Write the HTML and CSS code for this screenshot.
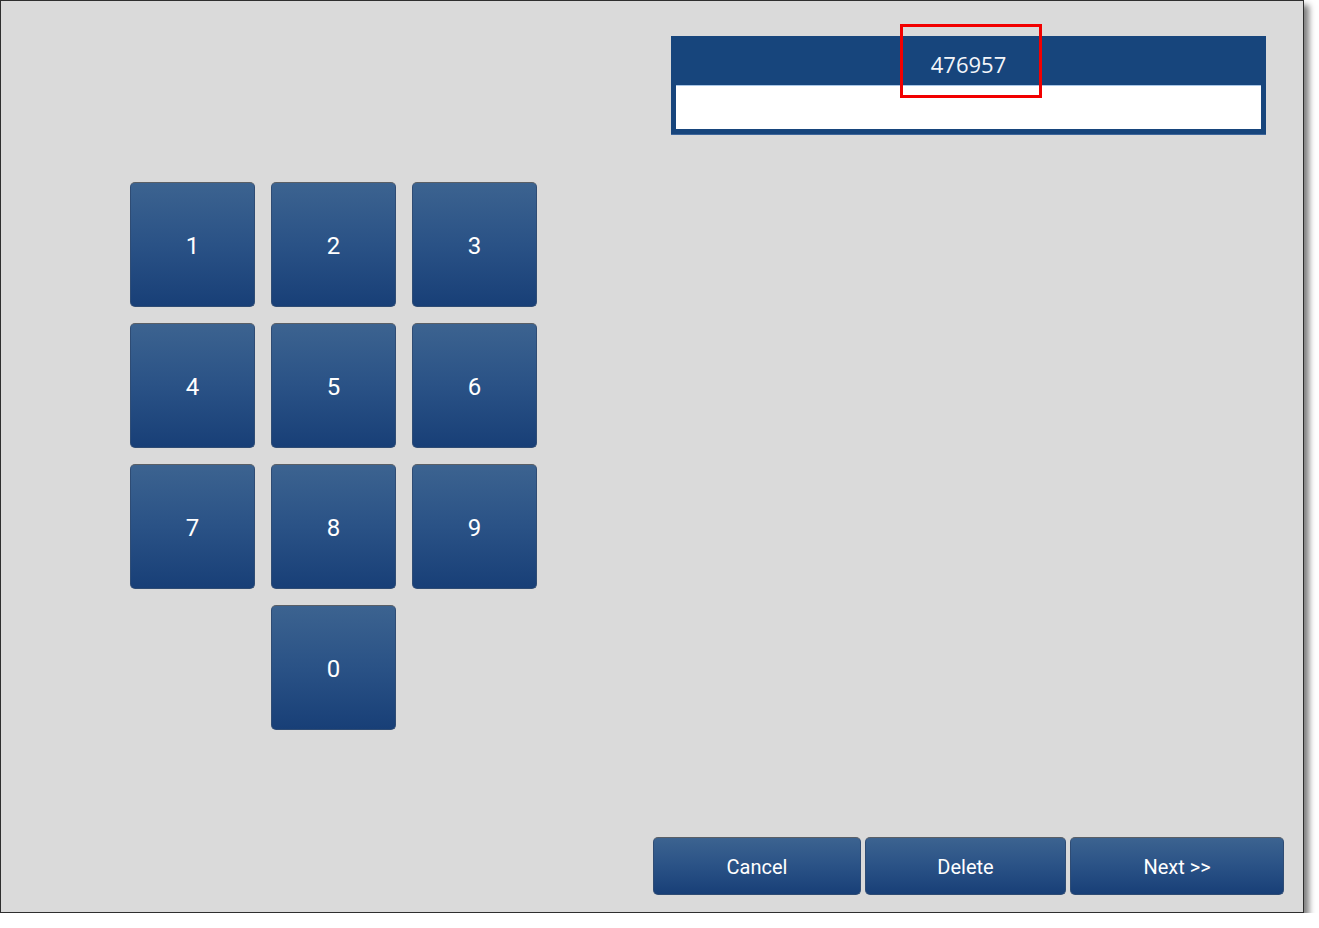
FILE: index.html
```html
<!DOCTYPE html>
<html lang="en">
<head>
<meta charset="utf-8">
<title>Keypad</title>
<link rel="stylesheet" href="styles.css">
</head>
<body>
<div class="frame">
  <div class="keypad">
    <button class="key">1</button>
    <button class="key">2</button>
    <button class="key">3</button>
    <button class="key">4</button>
    <button class="key">5</button>
    <button class="key">6</button>
    <button class="key">7</button>
    <button class="key">8</button>
    <button class="key">9</button>
    <button class="key key-zero">0</button>
  </div>
  <div class="side">
    <div class="display">
      <div class="display-head">476957</div>
      <div class="display-field"></div>
    </div>
    <div class="actions">
      <button class="action action-cancel">Cancel</button>
      <button class="action action-delete">Delete</button>
      <button class="action action-next">Next &gt;&gt;</button>
    </div>
  </div>
  <div class="callout"></div>
</div>
</body>
</html>
```

FILE: styles.css
```css
html, body {
  margin: 0;
  padding: 0;
  background: #ffffff;
}

.frame {
  position: relative;
  box-sizing: border-box;
  width: 1304px;
  height: 913px;
  border: 1px solid #2e2e2e;
  background: #dadada;
  box-shadow: 5px 5px 6px rgba(0, 0, 0, 0.5);
  padding: 35px 19px 17px 129px;
  display: grid;
  grid-template-columns: 407px 631px;
  column-gap: 116px;
  font-family: Roboto, "Liberation Sans", sans-serif;
}

.keypad {
  margin-top: 146px;
  display: grid;
  grid-template-columns: repeat(3, 125px);
  grid-auto-rows: 125px;
  gap: 16px;
  align-content: start;
}

.key,
.action {
  box-sizing: border-box;
  margin: 0;
  padding: 0;
  border: 1px solid #2f4c74;
  border-top-color: #5a5f66;
  border-radius: 5px;
  background: linear-gradient(to bottom, #3c6390 0%, #2a5286 50%, #183f77 100%);
  color: #ffffff;
  font-family: Roboto, "Liberation Sans", sans-serif;
  display: flex;
  align-items: center;
  justify-content: center;
}

.key {
  font-size: 24px;
  padding-top: 3px;
}

.key-zero {
  grid-column: 2;
}

.side {
  display: flex;
  flex-direction: column;
}

.display {
  margin-left: 18px;
  width: 595px;
  box-sizing: border-box;
  background: #17457c;
  padding: 0 5px 5px 5px;
  box-shadow: 0 1px 0 #3d659a;
}

.display-head {
  box-sizing: border-box;
  height: 49px;
  padding-top: 15px;
  line-height: 26px;
  text-align: center;
  color: #f4f6fa;
  font-family: "Open Sans", "Noto Sans", sans-serif;
  font-size: 22px;
}

.display-field {
  height: 44px;
  box-sizing: border-box;
  background: #ffffff;
  border-top: 1px solid #a9c6e6;
}

.actions {
  margin-top: auto;
  display: flex;
  gap: 4px;
  height: 58px;
}

.action {
  font-size: 20px;
  height: 58px;
  padding-top: 2px;
}

.action-cancel { width: 208px; }
.action-delete { width: 201px; }
.action-next { width: 214px; }

.callout {
  position: absolute;
  left: 899px;
  top: 23px;
  width: 142px;
  height: 74px;
  box-sizing: border-box;
  border: 3px solid #f20000;
}
```
